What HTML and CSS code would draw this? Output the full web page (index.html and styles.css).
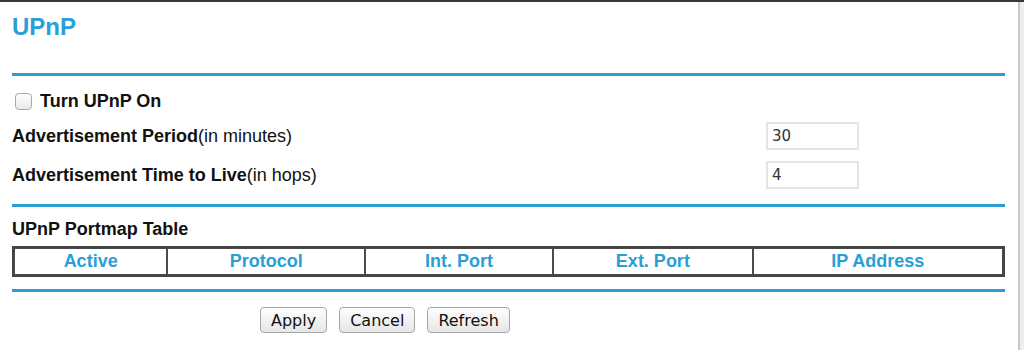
FILE: index.html
```html
<!DOCTYPE html>
<html>
  <head>
    <title>UPnP</title>
    <link rel="stylesheet" href="styles.css">
  </head>
  <body>
    <div class="page">
      <h1 class="title">UPnP</h1>
      <hr class="rule">

      <label class="check-row">
        <input type="checkbox" class="check">
        Turn UPnP On
      </label>

      <div class="field-row">
        <span class="field-label"><b>Advertisement Period</b>(in minutes)</span>
        <input class="field-input" type="text" value="30">
      </div>
      <div class="field-row">
        <span class="field-label"><b>Advertisement Time to Live</b>(in hops)</span>
        <input class="field-input" type="text" value="4">
      </div>

      <hr class="rule rule-mid">

      <h2 class="section-title">UPnP Portmap Table</h2>
      <table class="portmap">
        <colgroup>
          <col class="col-active">
          <col class="col-protocol">
          <col class="col-int">
          <col class="col-ext">
          <col class="col-ip">
        </colgroup>
        <tr>
          <th>Active</th>
          <th>Protocol</th>
          <th>Int. Port</th>
          <th>Ext. Port</th>
          <th>IP Address</th>
        </tr>
      </table>

      <hr class="rule rule-last">

      <div class="actions">
        <button type="button" class="btn">Apply</button>
        <button type="button" class="btn">Cancel</button>
        <button type="button" class="btn">Refresh</button>
      </div>
    </div>
    <div class="track"></div>
  </body>
</html>
```

FILE: styles.css
```css
html, body {
  height: 100%;
}
body {
  margin: 0;
  display: flex;
  border-top: 2px solid #383838;
  box-sizing: border-box;
  background-color: #fff;
  font-family: "Liberation Sans", Arial, sans-serif;
  font-size: 18px;
  color: #111;
}

.page {
  flex: 1;
  padding: 0 13px 0 12px;
  border-right: 2px solid #c8c8c8;
}

.track {
  width: 4px;
  background-color: #ededed;
}

.title {
  margin: 12px 0 0 0;
  font-size: 24px;
  line-height: 26px;
  font-weight: bold;
  color: #2a9fd6;
}

.rule {
  height: 3px;
  margin: 33px 0 0 0;
  border: none;
  background-color: #2a9fd6;
}

.check-row {
  display: flex;
  align-items: center;
  height: 18px;
  margin-top: 16px;
  font-weight: bold;
  line-height: 18px;
}

.check {
  appearance: none;
  width: 17px;
  height: 17px;
  margin: 0 8px 0 3px;
  border: 1px solid #a9a9a9;
  border-radius: 4px;
  background: linear-gradient(#fff, #e9e9e9);
  box-sizing: border-box;
}

.field-row {
  display: grid;
  grid-template-columns: 754px 93px;
  align-items: center;
  height: 28px;
  margin-top: 12px;
}
.field-row + .field-row {
  margin-top: 11px;
}

.field-label b {
  font-weight: bold;
}

.field-input {
  width: 93px;
  height: 28px;
  margin: 0;
  padding: 0 0 0 4px;
  box-sizing: border-box;
  border: 2px solid #e4e4e4;
  font-family: "DejaVu Sans", sans-serif;
  font-size: 15px;
  color: #333;
}

.rule-mid {
  margin-top: 15px;
}

.section-title {
  margin: 12px 0 0 0;
  font-size: 18px;
  line-height: 20px;
}

.portmap {
  width: 100%;
  margin-top: 7px;
  table-layout: fixed;
  border-collapse: separate;
  border-spacing: 0;
  border: 2px solid #444;
}

.col-active { width: 15.5%; }
.col-protocol { width: 20%; }
.col-int { width: 19%; }
.col-ext { width: 20.2%; }
.col-ip { width: 25.3%; }

.portmap th {
  height: 25px;
  padding: 0;
  border: 1px solid #4a4a4a;
  font-size: 18px;
  font-weight: bold;
  color: #2a9fd6;
  text-align: center;
}

.rule-last {
  margin-top: 12px;
}

.actions {
  display: flex;
  gap: 12px;
  margin-top: 15px;
  padding-left: 248px;
}

.btn {
  height: 26px;
  padding: 0 10px;
  border: 1px solid #a6a6a6;
  border-radius: 4px;
  background: linear-gradient(#fefefe, #e6e6e6);
  font-family: "DejaVu Sans", sans-serif;
  font-size: 16px;
  color: #111;
}
```
